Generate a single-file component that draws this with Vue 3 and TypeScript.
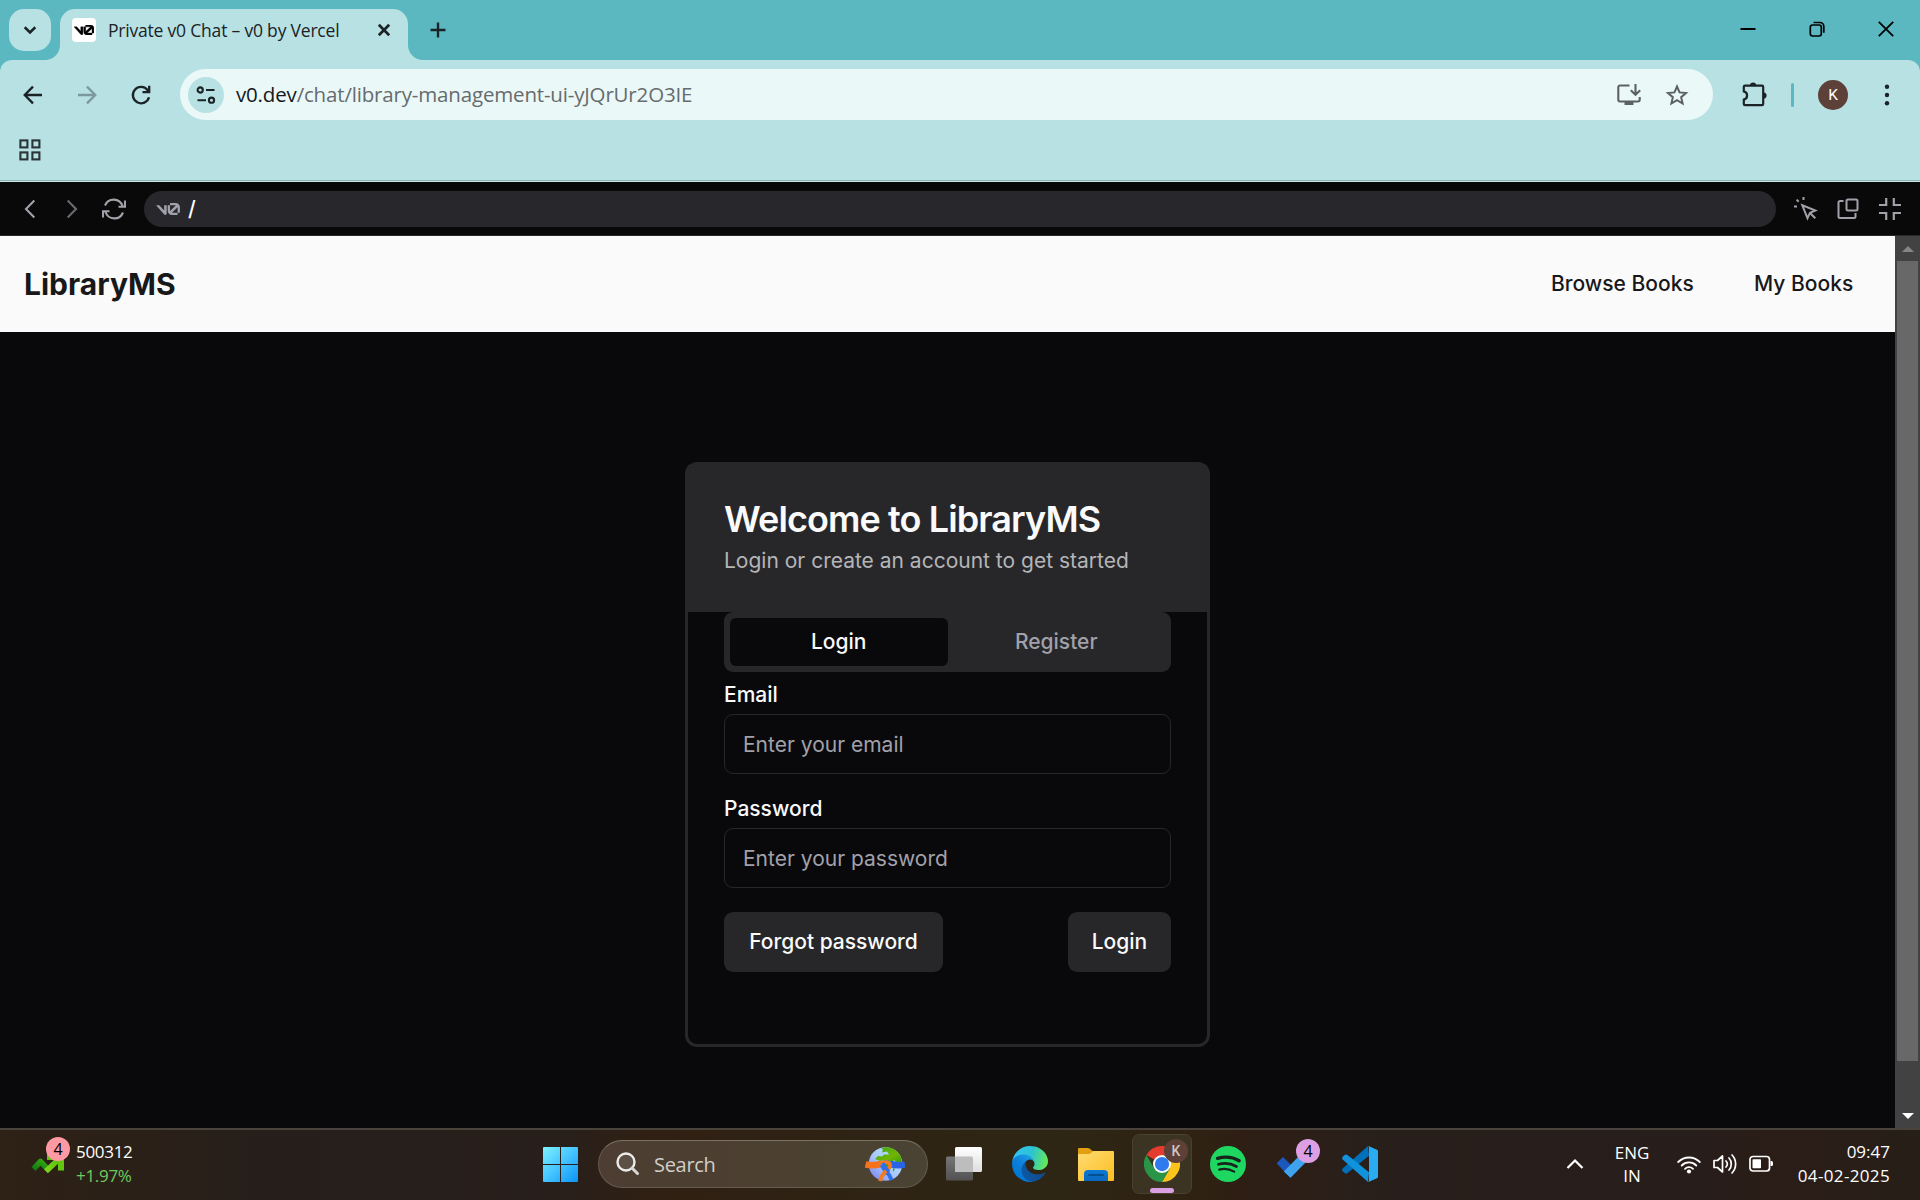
<script setup lang="ts">
import { ref } from 'vue'

interface NavLink {
  label: string
  width: number
}

const links: NavLink[] = [
  { label: 'Browse Books', width: 143 },
  { label: 'My Books', width: 99 },
]

const tabs = ['Login', 'Register']
const activeTab = ref<string>('Login')
const email = ref<string>('')
const password = ref<string>('')
</script>

<template>
  <div class="screen">
    <!-- Browser tab strip -->
    <div class="tabstrip">
      <button class="tab-search" aria-label="Search tabs">
        <svg width="42" height="42" viewBox="0 0 42 42"><path d="M15.7 18.3 21 23.4 26.3 18.3" fill="none" stroke="#1b2326" stroke-width="2.6" /></svg>
      </button>
      <div class="tab">
        <span class="favicon">
          <svg width="20" height="10" viewBox="0 0 40 20"><path d="M23.4 0h9.5a7 7 0 0 1 7 7v9.1H36V7l-9.5 9.1H36v3.7h-9.4a7 7 0 0 1-7.1-7V3.7h3.9v9.5l9.8-9.5h-9.8Z M13.8 19.1 0 3.7h5.5l8.1 9V3.7h4.2v13.9c0 2.1-2.6 3.1-4 1.5Z" fill="#000" stroke="#000" stroke-width=".8" /></svg>
        </span>
        <span class="tab-title">Private v0 Chat – v0 by Vercel</span>
        <svg class="tab-close" width="14" height="14" viewBox="0 0 14 14"><path d="M1.8 1.8 12.2 12.2M12.2 1.8 1.8 12.2" stroke="#1b2326" stroke-width="2.7" /></svg>
      </div>
      <svg class="new-tab" width="16" height="16" viewBox="0 0 16 16"><path d="M8 .5v15M.5 8h15" stroke="#1b2326" stroke-width="2.4" /></svg>
      <div class="window-controls">
        <svg width="16" height="16" viewBox="0 0 16 16"><path d="M.5 8h15" stroke="#000" stroke-width="2" /></svg>
        <svg width="16" height="16" viewBox="0 0 16 16"><rect x="1.3" y="4" width="11" height="11" rx="2.2" fill="none" stroke="#000" stroke-width="1.7" /><path d="M4.6 1.5h6.2a4 4 0 0 1 4 4v6.2" fill="none" stroke="#000" stroke-width="1.7" /></svg>
        <svg width="16" height="16" viewBox="0 0 16 16"><path d="M.8.8 15.2 15.2M15.2.8.8 15.2" stroke="#000" stroke-width="1.8" /></svg>
      </div>
    </div>

    <!-- Browser toolbar -->
    <div class="toolbar">
      <div class="toolbar-row">
        <svg class="ic-back" width="24" height="24" viewBox="0 0 24 24"><path d="M21 12H4.5M12 3.6 3.7 12l8.3 8.4" fill="none" stroke="#1b2326" stroke-width="2.3" /></svg>
        <svg class="ic-fwd" width="24" height="24" viewBox="0 0 24 24"><path d="M3 12h16.500M12 3.600l8.300 8.400-8.300 8.400" fill="none" stroke="#7b999c" stroke-width="2.3" /></svg>
        <svg class="ic-reload" width="24" height="24" viewBox="0 0 24 24"><path d="M20 14.200A8.200 8.200 0 1 1 18.700 7.200M20.200 2.700v6.500h-6.700M20 9 17.500 6" fill="none" stroke="#1b2326" stroke-width="2.3" /></svg>
        <div class="omnibox">
          <span class="site-info">
            <svg width="20" height="20" viewBox="0 0 20 20"><g fill="none" stroke="#1b2326" stroke-width="2.100"><circle cx="4.200" cy="5" r="2.600" /><path d="M10 5h8.500M1.500 15.200H10" /><circle cx="15.500" cy="15.200" r="2.600" /></g></svg>
          </span>
          <span class="url"><b>v0.dev</b>/chat/library-management-ui-yJQrUr2O3IE</span>
          <svg class="ic-install" width="24" height="22" viewBox="0 0 24 22"><g fill="none" stroke="#5c6163" stroke-width="2.100"><path d="M12.500 1.500H3a1.700 1.700 0 0 0-1.700 1.700v12.600A1.700 1.700 0 0 0 3 17.500h18a1.700 1.700 0 0 0 1.700-1.700V13" /><path d="M18.500 0v10.500M13.800 6.200l4.700 4.600 4.700-4.600" /></g><path d="M7.500 17.500h9V21h-9Z" fill="#5c6163" /></svg>
          <svg class="ic-star" width="24" height="24" viewBox="0 0 24 24"><path d="m12 3.500 2.550 5.900 6.500.55-4.900 4.250 1.450 6.300L12 17.100 6.400 20.500l1.450-6.300-4.900-4.250 6.500-.55Z" fill="none" stroke="#5c6163" stroke-width="2" /></svg>
        </div>
        <svg class="ic-puzzle" width="25" height="25" viewBox="0 0 25 25"><path d="M3 3.700h17a1.200 1.200 0 0 1 1.200 1.200v17a1.200 1.200 0 0 1-1.200 1.200H3a1.200 1.200 0 0 1-1.200-1.200v-4.300a4.200 4.200 0 0 0 0-8.200V4.900A1.200 1.200 0 0 1 3 3.700Z" fill="none" stroke="#1b2326" stroke-width="2.200" /><path d="M8 3.500a3.100 3.100 0 0 1 6.200 0ZM21.500 10.500a3.100 3.100 0 0 1 0 6.200Z" fill="#1b2326" /></svg>
        <span class="divider"></span>
        <span class="avatar">K</span>
        <svg class="ic-dots" width="6" height="24" viewBox="0 0 6 24"><g fill="#1b2326"><circle cx="3" cy="3.700" r="2.200" /><circle cx="3" cy="12" r="2.200" /><circle cx="3" cy="20.300" r="2.200" /></g></svg>
      </div>
      <div class="bookmarks">
        <svg width="22" height="22" viewBox="0 0 22 22"><g fill="none" stroke="#2a3335" stroke-width="2.100"><rect x="1.400" y="1.400" width="7" height="7" /><rect x="13.400" y="1.400" width="7" height="7" /><rect x="1.400" y="13.400" width="7" height="7" /><rect x="13.400" y="13.400" width="7" height="7" /></g></svg>
      </div>
    </div>

    <!-- Preview bar -->
    <div class="preview-bar">
      <svg class="pv-back" width="12" height="20" viewBox="0 0 12 20"><path d="M10.300 1.500 2 10l8.300 8.500" fill="none" stroke="#a1a1aa" stroke-width="2.100" /></svg>
      <svg class="pv-fwd" width="12" height="20" viewBox="0 0 12 20"><path d="M1.700 1.500 10 10l-8.300 8.500" fill="none" stroke="#696970" stroke-width="2.100" /></svg>
      <svg class="pv-refresh" width="24" height="22" viewBox="0 0 24 22"><g fill="none" stroke="#a1a1aa" stroke-width="2.100"><path d="M3 7.500A9.300 9.300 0 0 1 20.500 8M23 2.500v6.300h-6.500M21 14.500A9.300 9.300 0 0 1 3.500 14M1 19.500v-6.300h6.500" /></g></svg>
      <div class="pv-address">
        <svg width="24" height="12" viewBox="0 0 40 20"><path d="M23.400 0h9.500a7 7 0 0 1 7 7v9.100H36V7l-9.500 9.100H36v3.700h-9.400a7 7 0 0 1-7.100-7V3.700h3.900v9.500l9.800-9.500h-9.800Z M13.800 19.100 0 3.700h5.500l8.100 9V3.700h4.200v13.900c0 2.100-2.600 3.100-4 1.500Z" fill="#a1a1aa" /></svg>
        <span>/</span>
      </div>
      <svg class="pv-select" width="24" height="24" viewBox="0 0 24 24"><g fill="none" stroke="#a1a1aa" stroke-width="2"><path d="m8.300 8.300 13.200 5.200-5.500 2.200-2.500 5.500ZM16 16l5.300 5.300" /><path d="M9.500 0v3M0 9.500h3M2.600 2.600 4.700 4.700" /></g></svg>
      <svg class="pv-open" width="22" height="22" viewBox="0 0 22 22"><g fill="none" stroke="#a1a1aa" stroke-width="2"><rect x="9.500" y="1.500" width="11" height="11" rx="1.500" /><path d="M6.500 3H3a1.500 1.500 0 0 0-1.500 1.500v14A1.500 1.500 0 0 0 3 20h14a1.500 1.500 0 0 0 1.500-1.500V15" /></g></svg>
      <svg class="pv-min" width="22" height="22" viewBox="0 0 22 22"><path d="M7.200 0v7H0M14.800 0v7H22M7.200 22v-7H0M14.800 22v-7H22" fill="none" stroke="#a1a1aa" stroke-width="2.200" /></svg>
    </div>

    <!-- Previewed page -->
    <div class="viewport">
      <div class="page">
        <header class="site-header">
          <h1>LibraryMS</h1>
          <nav>
            <a v-for="link in links" :key="link.label" :style="{ width: link.width + 'px' }">{{ link.label }}</a>
          </nav>
        </header>
        <main>
          <section class="card">
            <div class="card-head">
              <h2>Welcome to LibraryMS</h2>
              <p>Login or create an account to get started</p>
            </div>
            <div class="card-body">
              <div class="tabs">
                <button v-for="tab in tabs" :key="tab" :class="{ active: tab === activeTab }" @click="activeTab = tab">{{ tab }}</button>
              </div>
              <form @submit.prevent>
                <label for="email">Email</label>
                <input id="email" v-model="email" type="email" placeholder="Enter your email" />
                <label for="password">Password</label>
                <input id="password" v-model="password" type="password" placeholder="Enter your password" />
                <div class="actions">
                  <button type="button" class="forgot">Forgot password</button>
                  <button type="submit" class="login">Login</button>
                </div>
              </form>
            </div>
          </section>
        </main>
      </div>
      <div class="scrollbar">
        <svg width="12" height="6" viewBox="0 0 12 6"><path d="M0 6 6 0l6 6Z" fill="#868686" /></svg>
        <span class="thumb"></span>
        <svg width="12" height="6" viewBox="0 0 12 6"><path d="M0 0h12L6 6Z" fill="#fff" /></svg>
      </div>
    </div>

    <!-- Taskbar -->
    <footer class="taskbar">
      <div class="widget">
        <span class="stock">
          <svg width="34" height="24" viewBox="0 0 34 24">
            <defs>
              <linearGradient id="stockA" x1="0" y1="1" x2="1" y2="0"><stop offset="0" stop-color="#0e7a14" /><stop offset="1" stop-color="#36a80f" /></linearGradient>
              <linearGradient id="stockB" x1="0" y1="1" x2="1" y2="0"><stop offset="0" stop-color="#7fd61b" /><stop offset="1" stop-color="#57bd0c" /></linearGradient>
            </defs>
            <path d="m2.500 18 7-7.500 7.500 8" fill="none" stroke="url(#stockA)" stroke-width="5.500" stroke-linejoin="round" />
            <path d="M15 20.300 29 7" fill="none" stroke="url(#stockB)" stroke-width="5.500" />
            <path d="M16 3h17v16.500h-6V9H16Z" fill="#62c50e" />
          </svg>
          <span class="badge pink">4</span>
        </span>
        <div class="quote"><span>500312</span><span class="up">+1.97%</span></div>
      </div>

      <div class="dock">
        <span class="slot start">
          <svg width="35" height="35" viewBox="0 0 35 35">
            <defs><linearGradient id="win" x1="0" y1="0" x2="1" y2="1"><stop offset="0" stop-color="#7df1ff" /><stop offset=".5" stop-color="#45c4ff" /><stop offset="1" stop-color="#0b94f8" /></linearGradient></defs>
            <path d="M1 0h16v17H0V1a1 1 0 0 1 1-1ZM18 0h16a1 1 0 0 1 1 1v16H18ZM0 18h17v17H1a1 1 0 0 1-1-1ZM18 18h17v16a1 1 0 0 1-1 1H18Z" fill="url(#win)" />
          </svg>
        </span>
        <div class="search">
          <svg width="24" height="24" viewBox="0 0 24 24"><circle cx="10" cy="10" r="8.500" fill="#ffffff18" stroke="#ececea" stroke-width="2.400" /><path d="m16 16 5.500 5.500" stroke="#d9d7d3" stroke-width="3" stroke-linecap="round" /></svg>
          <span>Search</span>
          <svg class="globe" width="40" height="36" viewBox="0 0 40 36">
            <defs>
              <linearGradient id="sea" x1="1" y1="0" x2="0" y2="1"><stop offset="0" stop-color="#b4efff" /><stop offset=".55" stop-color="#a9c8fb" /><stop offset="1" stop-color="#7478ee" /></linearGradient>
              <linearGradient id="land" x1="0" y1="0" x2="1" y2="1"><stop offset="0" stop-color="#35a51b" /><stop offset=".6" stop-color="#72b600" /><stop offset="1" stop-color="#379c14" /></linearGradient>
            </defs>
            <circle cx="20.500" cy="18" r="16.800" fill="url(#sea)" />
            <path d="M16 2.500C22-.5 32 2 36 11l1 6h-5l-3-3-2 3-6-3-6 1-5-2 3-3 4 .500 2-2 5 0-2-3-5 1 1-3Z" fill="url(#land)" />
            <path d="M17 18h7l2 4-4 3v4h-2l-1-5-3-3ZM28 22l2 1-2 3Z" fill="#3e9d17" />
            <g fill="none">
              <path d="M.500 18.500c6 1.500 11 .500 16-.500" stroke="#f6721c" stroke-width="6.500" />
              <path d="M40 18.500c-6 1.500-11 .500-15-.500" stroke="#2864e5" stroke-width="6.500" />
              <path d="M26 18c-4-3-9-2-9 1 0 5 7 6 9.500 15" stroke="#2f6fe8" stroke-width="3.800" />
              <path d="M15 18c5-3 11-2 10 2-1 4-8 6-10 15" stroke="#f6781f" stroke-width="3.800" />
              <path d="M18 17c1 4 4 6 6 9" stroke="#2f6fe8" stroke-width="3.200" />
            </g>
          </svg>
        </div>
        <span class="slot">
          <svg width="36" height="36" viewBox="0 0 36 36">
            <defs><linearGradient id="tvw" x1="0" y1="0" x2="0" y2="1"><stop offset="0" stop-color="#fff" /><stop offset="1" stop-color="#dedede" /></linearGradient><linearGradient id="tvg" x1="0" y1="0" x2="0" y2="1"><stop offset="0" stop-color="#767676" /><stop offset="1" stop-color="#515151" /></linearGradient></defs>
            <rect x="0" y="10.500" width="27" height="24" rx="1.500" fill="url(#tvg)" />
            <rect x="9" y="1" width="27" height="25" rx="1.500" fill="url(#tvw)" />
            <path d="M9 10.500h16.500A1.500 1.500 0 0 1 27 12v14H10.500A1.500 1.500 0 0 1 9 24.500Z" fill="#bdbdbd" />
          </svg>
        </span>
        <span class="slot">
          <svg width="36" height="36" viewBox="0 0 256 256">
            <defs>
              <linearGradient id="edA" x1="63" y1="178" x2="241" y2="178" gradientUnits="userSpaceOnUse"><stop offset="0" stop-color="#0c59a4" /><stop offset="1" stop-color="#114a8b" /></linearGradient>
              <linearGradient id="edB" x1="150" y1="100" x2="46" y2="215" gradientUnits="userSpaceOnUse"><stop offset="0" stop-color="#1b9de2" /><stop offset=".5" stop-color="#0c80dc" /><stop offset="1" stop-color="#0078d4" /></linearGradient>
              <linearGradient id="edC" x1="10" y1="60" x2="250" y2="120" gradientUnits="userSpaceOnUse"><stop offset="0" stop-color="#35c1f1" /><stop offset=".5" stop-color="#2bc3d2" /><stop offset="1" stop-color="#66eb53" /></linearGradient>
            </defs>
            <path d="M231 190.500a93.700 93.700 0 0 1-10.500 4.700 101.900 101.900 0 0 1-35.900 6.400c-47.300 0-88.500-32.500-88.500-74.300a31.500 31.500 0 0 1 16.400-27.300c-42.800 1.800-53.800 46.400-53.800 72.500 0 74 68.100 81.400 82.800 81.400 7.900 0 19.800-2.300 27-4.600l1.300-.4a128.300 128.300 0 0 0 66.600-52.800 4 4 0 0 0-5.400-5.600Z" fill="url(#edA)" />
            <path d="M105.700 241.400a79.200 79.200 0 0 1-22.700-21.300 80.700 80.700 0 0 1 29.500-120c3.200-1.500 8.400-4.100 15.500-4a32.400 32.400 0 0 1 25.700 13 31.900 31.900 0 0 1 6.300 18.700c0-.2 24.500-79.600-80-79.600-43.900 0-80 41.700-80 78.200a130.200 130.200 0 0 0 12.100 56 128 128 0 0 0 156.400 67 75.500 75.500 0 0 1-62.800-8Z" fill="url(#edB)" />
            <path d="M152.300 148.900c-.9 1-3.400 2.500-3.400 5.600 0 2.600 1.700 5.200 4.800 7.300 14.300 10 41.400 8.600 41.500 8.600a59.600 59.600 0 0 0 30.300-8.300 61.400 61.400 0 0 0 30.400-52.900c.3-22.400-8-37.300-11.300-43.900C223.500 23.900 177.700 0 128 0A128 128 0 0 0 0 126.200c.5-36.500 36.800-66 80-66 3.500 0 23.500.3 42 10a72.600 72.600 0 0 1 30.900 29.300c6.100 10.600 7.200 24.100 7.200 29.500s-2.700 13.300-7.800 19.900Z" fill="url(#edC)" />
          </svg>
        </span>
        <span class="slot">
          <svg width="36" height="36" viewBox="0 0 36 36">
            <defs><linearGradient id="fol" x1="0" y1="0" x2="1" y2="1"><stop offset="0" stop-color="#ffdc73" /><stop offset="1" stop-color="#fcbe20" /></linearGradient><linearGradient id="fob" x1="0" y1="0" x2="0" y2="1"><stop offset="0" stop-color="#0b7ad6" /><stop offset="1" stop-color="#0a67bd" /></linearGradient></defs>
            <path d="M0 9V3a1 1 0 0 1 1-1h9c2 0 3.500 3 5 3h9v6H0Z" fill="#e2a010" />
            <path d="M0 8h11c2 0 3-3 5-3h19a1 1 0 0 1 1 1v28a1 1 0 0 1-1 1H1a1 1 0 0 1-1-1Z" fill="url(#fol)" />
            <path d="M6 35v-7a4 4 0 0 1 4-4h16a4 4 0 0 1 4 4v7Z" fill="url(#fob)" />
            <path d="M11 29h14" stroke="#064f8f" stroke-width="1.800" stroke-linecap="round" />
          </svg>
        </span>
        <span class="slot">
          <span class="tile">
            <svg width="36" height="36" viewBox="0 0 48 48">
              <path d="M24 24 3.200 12A24 24 0 0 1 44.800 12H24Z" fill="#e33b2e" />
              <path d="M24 24 44.800 12A24 24 0 0 1 24 48L34.400 30Z" fill="#fcc31a" />
              <path d="M24 24 34.400 30 24 48A24 24 0 0 1 3.200 12L13.600 30Z" fill="#2a9547" />
              <circle cx="24" cy="24" r="12" fill="#fff" />
              <circle cx="24" cy="24" r="9.500" fill="#2f7bee" />
            </svg>
            <span class="mini-avatar">K</span>
            <span class="running"></span>
          </span>
        </span>
        <span class="slot">
          <svg width="36" height="36" viewBox="0 0 36 36"><circle cx="18" cy="18" r="18" fill="#1ed760" /><g fill="none" stroke="#16241b" stroke-linecap="round"><path d="M7.500 12.400c7-2 15.500-1.300 21.700 2.300" stroke-width="3.300" /><path d="M8.500 18.300c6-1.600 12.700-.9 18 2.200" stroke-width="2.700" /><path d="M9.200 23.600c5.200-1.300 10.400-.6 15 2" stroke-width="2.200" /></g></svg>
        </span>
        <span class="slot todo">
          <svg width="36" height="36" viewBox="0 0 36 36"><path d="M.600 17.200 7 11l14 14-6.500 7Z" fill="#1b57bd" /><path d="m7.800 25.600 20-20.400 6.700 6.300-20 20.300Z" fill="#3fa3ef" /></svg>
          <span class="badge lilac">4</span>
        </span>
        <span class="slot">
          <svg width="36" height="36" viewBox="0 0 36 36">
            <path d="M27 9.700 5.500 27c-1 .8-2 .8-2.900 0L.7 25.200c-.8-.8-.8-1.800 0-2.600L26 0Z" fill="#0070bb" />
            <path d="M27 26.300 5.500 9c-1-.8-2-.8-2.900 0L.7 10.800c-.8.800-.8 1.800 0 2.600L26 36Z" fill="#1192dc" />
            <path d="M26.500 0 35 3.800c.7.300 1 .8 1 1.500v25.400c0 .7-.3 1.200-1 1.500L26.500 36c-.3-.3.500-1 .5-2V2c0-1-.8-1.700-.5-2Z" fill="#2bacf2" />
          </svg>
        </span>
      </div>

      <div class="tray">
        <svg class="ic-up" width="18" height="12" viewBox="0 0 18 12"><path d="m1.500 10 7.500-7.500L16.500 10" fill="none" stroke="#fff" stroke-width="2.200" /></svg>
        <div class="lang"><span>ENG</span><span>IN</span></div>
        <svg width="24" height="20" viewBox="0 0 24 20"><g fill="none" stroke="#fff" stroke-width="1.800" stroke-linecap="round"><path d="M1.200 8a15.200 15.200 0 0 1 21.600 0" /><path d="M4.700 11.500a10.300 10.300 0 0 1 14.600 0" /><path d="M8 14.800a5.600 5.600 0 0 1 8 0" /></g><circle cx="12" cy="17.500" r="2.100" fill="#fff" /></svg>
        <svg width="24" height="22" viewBox="0 0 24 22"><g fill="none" stroke="#fff" stroke-width="1.700" stroke-linecap="round" stroke-linejoin="round"><path d="M1 7.500h3.500L9.500 3v16l-5-4.500H1Z" /><path d="M13 8a4.500 4.500 0 0 1 0 6M16 5a9 9 0 0 1 0 12M19 2a13 13 0 0 1 0 18" /></g></svg>
        <svg width="24" height="18" viewBox="0 0 24 18"><rect x="1" y="1.500" width="19.500" height="14.500" rx="3" fill="none" stroke="#fff" stroke-width="1.700" /><rect x="3.500" y="4.200" width="8.500" height="9" rx=".8" fill="#fff" /><path d="M21.500 6h1a1.500 1.500 0 0 1 1.500 1.500v2a1.500 1.500 0 0 1-1.500 1.500h-1Z" fill="#fff" /></svg>
        <div class="clock"><span class="time">09:47</span><span class="date">04-02-2025</span></div>
      </div>
    </footer>
  </div>
</template>

<style>
body {
  margin: 0;
  overflow: hidden;
  background: #09090b;
}
</style>

<style scoped>
* {
  box-sizing: border-box;
}
svg {
  display: block;
  flex: none;
}
button,
input {
  font: inherit;
  border: 0;
  padding: 0;
  margin: 0;
}
.screen {
  width: 1920px;
  height: 1200px;
  display: flex;
  flex-direction: column;
  overflow: hidden;
  font-family: "Open Sans", "Noto Sans", sans-serif;
  color: #1b2326;
  white-space: nowrap;
}

/* tab strip */
.tabstrip {
  height: 60px;
  flex: none;
  display: flex;
  align-items: flex-start;
  background: #5bb8c1;
  padding-left: 9px;
}
.tab-search {
  width: 42px;
  height: 42px;
  margin-top: 9px;
  border-radius: 15px;
  background: #b8e1e4;
}
.tab {
  position: relative;
  width: 348px;
  height: 51px;
  margin: 9px 0 0 9px;
  padding: 0 17px 9px 12px;
  border-radius: 15px 15px 0 0;
  background: #b8e1e4;
  display: flex;
  align-items: center;
}
.tab::before,
.tab::after {
  content: "";
  position: absolute;
  bottom: 0;
  width: 15px;
  height: 15px;
}
.tab::before {
  left: -15px;
  background: radial-gradient(circle at 0 0, transparent 14.5px, #b8e1e4 15.5px);
}
.tab::after {
  right: -15px;
  background: radial-gradient(circle at 100% 0, transparent 14.5px, #b8e1e4 15.5px);
}
.favicon {
  width: 24px;
  height: 24px;
  border-radius: 4px;
  background: #fff;
  display: flex;
  align-items: center;
  justify-content: center;
}
.tab-title {
  margin-left: 12px;
  font-size: 17.5px;
  letter-spacing: -0.2px;
}
.tab-close {
  margin-left: auto;
}
.new-tab {
  margin: 22px 0 0 22px;
}
.window-controls {
  margin: 21px 26px 0 auto;
  display: flex;
  gap: 53px;
}

/* toolbar */
.toolbar {
  height: 122px;
  flex: none;
  background: #b8e1e4;
  border-bottom: 1px solid #c9e8ea;
  box-shadow: inset 0 -1px #91b0b3;
  border-radius: 12px 12px 0 0;
  position: relative;
}
.tabstrip + .toolbar::before {
  content: "";
  position: absolute;
  inset: 0 0 auto;
  height: 12px;
  z-index: -1;
  background: #5bb8c1;
}
.toolbar-row {
  height: 70px;
  display: flex;
  align-items: center;
  padding-left: 21px;
}
.ic-fwd,
.ic-reload {
  margin-left: 30px;
}
.omnibox {
  margin-left: 27px;
  margin-bottom: 1px;
  width: 1533px;
  height: 51px;
  border-radius: 26px;
  background: #ebf8f8;
  display: flex;
  align-items: center;
  padding-left: 8px;
}
.site-info {
  width: 36px;
  height: 36px;
  border-radius: 50%;
  background: #b8e1e4;
  display: flex;
  align-items: center;
  justify-content: center;
}
.url {
  margin-left: 12px;
  margin-bottom: 1px;
  font-size: 20.5px;
  letter-spacing: -0.17px;
  color: #666b6d;
}
.url b {
  font-weight: 400;
  color: #14191b;
}
.ic-install {
  margin-left: auto;
}
.ic-star {
  margin: 0 24px 0 24px;
}
.ic-puzzle {
  margin-left: 29px;
  margin-top: -2px;
}
.divider {
  width: 3px;
  height: 24px;
  border-radius: 2px;
  margin-left: 24px;
  background: #5bb8c1;
}
.avatar {
  width: 30px;
  height: 30px;
  border-radius: 50%;
  margin-left: 24px;
  background: #5d4037;
  color: #fff;
  font: 15.500px/30px Roboto, sans-serif;
  text-align: center;
}
.ic-dots {
  margin-left: 36px;
}
.bookmarks {
  padding: 9px 0 0 19px;
}

/* preview bar */
.preview-bar {
  height: 54px;
  flex: none;
  background: #09090a;
  border-bottom: 1px solid #27272a;
  display: flex;
  align-items: center;
  padding-left: 24px;
}
.pv-fwd {
  margin-left: 30px;
}
.pv-refresh {
  margin-left: 24px;
}
.pv-address {
  width: 1632px;
  height: 36px;
  margin-left: 18px;
  border-radius: 18px;
  background: #27272c;
  display: flex;
  align-items: center;
  padding-left: 12px;
  color: #fff;
  font: 500 21px/36px Inter, sans-serif;
}
.pv-address span {
  margin-left: 8px;
}
.pv-select {
  margin-left: 18px;
}
.pv-open {
  margin-left: 19px;
}
.pv-min {
  margin-left: 20px;
}

/* page */
.viewport {
  height: 892px;
  flex: none;
  display: flex;
  background: #09090b;
}
.page {
  width: 1895px;
  font-family: Inter, "Liberation Sans", sans-serif;
  font-size: 21px;
  color: #fafafa;
}
.site-header {
  height: 96px;
  background: #fafafa;
  color: #18181b;
  display: flex;
  align-items: center;
  justify-content: space-between;
  padding: 0 42px 0 24px;
}
.site-header h1 {
  margin: 0;
  font-size: 30px;
  font-weight: 700;
}
.site-header nav {
  display: flex;
  gap: 60px;
  padding-bottom: 1px;
  font-weight: 500;
}
main {
  display: flex;
  justify-content: center;
  padding-top: 130px;
}
.card {
  width: 525px;
  height: 585px;
  border: 3px solid #27272a;
  border-radius: 12px;
  background: #09090b;
}
.card-head {
  height: 147px;
  padding: 36px;
  background: #27272a;
}
.card-head h2 {
  margin: 0 0 9px;
  font-size: 36px;
  line-height: 36px;
  font-weight: 600;
  letter-spacing: -0.9px;
}
.card-head p {
  margin: 0;
  line-height: 30px;
  color: #b5b5b8;
}
.card-body {
  padding: 0 36px;
}
.tabs {
  height: 60px;
  padding: 6px;
  border-radius: 9px;
  background: #27272a;
  display: flex;
}
.tabs button {
  flex: 1;
  border-radius: 6px;
  background: transparent;
  color: #a1a1aa;
  font-weight: 500;
  padding-bottom: 1px;
}
.tabs button.active {
  background: #09090b;
  color: #fafafa;
}
form {
  padding-top: 12px;
  display: flex;
  flex-direction: column;
}
label {
  line-height: 21px;
  font-weight: 500;
  margin-bottom: 9px;
}
input {
  height: 60px;
  border: 1px solid #27272a;
  border-radius: 9px;
  padding: 0 18px;
  background: #09090b;
  color: #fafafa;
  margin-bottom: 24px;
}
input::placeholder {
  color: #a1a1aa;
  opacity: 1;
}
.actions {
  display: flex;
  justify-content: space-between;
}
.actions button {
  height: 60px;
  border-radius: 9px;
  background: #27272a;
  color: #fafafa;
  font-weight: 500;
  padding-bottom: 1px;
}
.actions .forgot {
  width: 219px;
}
.actions .login {
  width: 103px;
}
.scrollbar {
  width: 25px;
  background: #424242;
  display: flex;
  flex-direction: column;
  align-items: center;
  padding-top: 10px;
}
.scrollbar .thumb {
  width: 21px;
  height: 800px;
  margin: 9px 0 52px;
  background: #686868;
}

/* taskbar */
.taskbar {
  height: 72px;
  flex: none;
  border-top: 2px solid #4a433c;
  padding-bottom: 2px;
  background: linear-gradient(90deg, #2e2116 0, #2a2018 160px, #261e1a 260px, #281f1b 560px, #302013 650px, #2e2314 880px, #2e2614 1050px, #2f2213 1200px, #2e1e14 1240px, #281f1b 1380px, #271d1a 1700px, #2b1d17 1780px, #271e18 1920px);
  color: #fff;
  display: flex;
  align-items: center;
  font-size: 17px;
}
.widget {
  width: 528px;
  padding-left: 31px;
  display: flex;
  align-items: center;
}
.stock {
  position: relative;
  width: 34px;
  height: 50px;
  padding-top: 12px;
}
.badge {
  position: absolute;
  width: 24px;
  height: 24px;
  border-radius: 50%;
  color: #000;
  font-size: 16px;
  line-height: 24px;
  text-align: center;
}
.badge.pink {
  left: 15px;
  top: -2px;
  background: #ff99a4;
}
.quote {
  margin-left: 11px;
  display: flex;
  flex-direction: column;
  line-height: 24px;
  letter-spacing: -0.3px;
}
.quote .up {
  color: #6ccb5f;
}
.dock {
  display: flex;
  align-items: center;
}
.slot {
  width: 66px;
  display: flex;
  justify-content: center;
}
.slot.start {
  width: 65px;
  margin-right: 5px;
}
.search {
  width: 330px;
  height: 48px;
  margin-right: 3px;
  border: 1px solid #645b4e;
  border-top-color: #7a7264;
  border-radius: 24px;
  background: linear-gradient(90deg, #4d3d32, #4b4231 80%, #4a4234);
  display: flex;
  align-items: center;
  padding-left: 17px;
  font-size: 20px;
  color: #d2cec8;
}
.search span {
  margin-left: 14px;
  letter-spacing: -0.3px;
}
.globe {
  margin-left: auto;
  margin-right: 22px;
}
.tile {
  position: relative;
  width: 60px;
  height: 60px;
  border-radius: 7px;
  border: 1px solid #48412f;
  background: #3b3423;
  display: flex;
  align-items: center;
  justify-content: center;
}
.mini-avatar {
  position: absolute;
  left: 31px;
  top: 4px;
  width: 24px;
  height: 24px;
  border-radius: 50%;
  background: #5d4037;
  color: #cfc5c1;
  font: 500 14px/24px Roboto, sans-serif;
  text-align: center;
}
.running {
  position: absolute;
  left: 17px;
  bottom: 0;
  width: 24px;
  height: 5px;
  border-radius: 3px;
  background: #dd9fe3;
}
.todo {
  position: relative;
}
.badge.lilac {
  left: 35px;
  top: -7px;
  background: #dd9fe3;
}
.tray {
  margin-left: auto;
  padding-right: 30px;
  display: flex;
  align-items: center;
  gap: 12px;
}
.lang {
  width: 60px;
  margin: 0 3px 0 6px;
  display: flex;
  flex-direction: column;
  align-items: center;
  line-height: 23px;
}
.clock {
  width: 105px;
  display: flex;
  flex-direction: column;
  align-items: flex-end;
  line-height: 24px;
}
.clock .date {
  letter-spacing: 0.35px;
}
</style>
